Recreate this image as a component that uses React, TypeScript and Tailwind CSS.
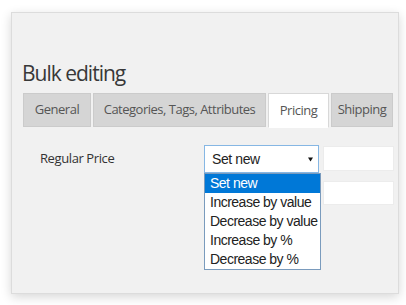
import React from 'react';

const tabs = [
  { label: 'General', w: 'w-[68px]' },
  { label: 'Categories, Tags, Attributes', w: 'w-[173px]' },
  { label: 'Pricing', w: 'w-[61px]', active: true },
  { label: 'Shipping', w: 'w-[62px]' },
];

const options = ['Set new', 'Increase by value', 'Decrease by value', 'Increase by %', 'Decrease by %'];

export default function App() {
  return (
    <div className="w-[406px] h-[305px] bg-white pt-[12px] pl-[11px] overflow-hidden">
      <div className="w-[388px] h-[282px] bg-[#f1f1f1] border border-[#dcdcdc] shadow-[0_3px_10px_rgba(0,0,0,0.16)] font-['Open_Sans',sans-serif]">
        <h1 className="mt-[46px] ml-[10px] text-[21px] leading-[29px] text-[#383838] tracking-[-1px]">Bulk editing</h1>

        <div className="mt-[5px] ml-[11px] flex gap-[2px] items-start">
          {tabs.map((t) => (
            <div
              key={t.label}
              className={`${t.w} flex items-center justify-center border text-[13px] tracking-[-0.5px] ${
                t.active
                  ? 'h-[35px] bg-white border-[#d8d8d8] border-b-white text-[#555]'
                  : 'h-[34px] bg-[#d5d5d5] border-[#cbcbcb] text-[#555]'
              }`}
            >
              {t.label}
            </div>
          ))}
        </div>

        <div className="mt-[17px] ml-[28px] flex">
          <div className="w-[164px] pt-[4px] text-[13px] text-[#333] tracking-[-0.4px]">Regular Price</div>
          <div className="relative">
            <div className="w-[115px] h-[28px] bg-white border border-[#86b7e4] flex items-center justify-between pl-[7px] pr-[5px] font-['Liberation_Sans',sans-serif] text-[14px] tracking-[-0.4px] text-[#222]">
              <span>Set new</span>
              <svg width="5" height="5" viewBox="0 0 5 5"><path d="M0 0.5h5L2.5 4.5z" fill="#111" /></svg>
            </div>
            <div className="absolute left-0 top-[28px] w-[117px] bg-white border border-[#7a9bbd] font-['Liberation_Sans',sans-serif] text-[14px] leading-[19px] tracking-[-0.5px] text-[#222] z-10">
              {options.map((o, i) => (
                <div key={o} className={`pl-[5px] h-[19px] whitespace-nowrap ${i === 0 ? 'bg-[#0078d7] text-white' : ''}`}>
                  {o}
                </div>
              ))}
            </div>
          </div>
          <div className="ml-[4px] flex flex-col gap-[10px] pt-[1px]">
            <div className="w-[71px] h-[25px] bg-white border border-[#ececec]" />
            <div className="w-[71px] h-[24px] bg-white border border-[#ececec]" />
          </div>
        </div>
      </div>
    </div>
  );
}
